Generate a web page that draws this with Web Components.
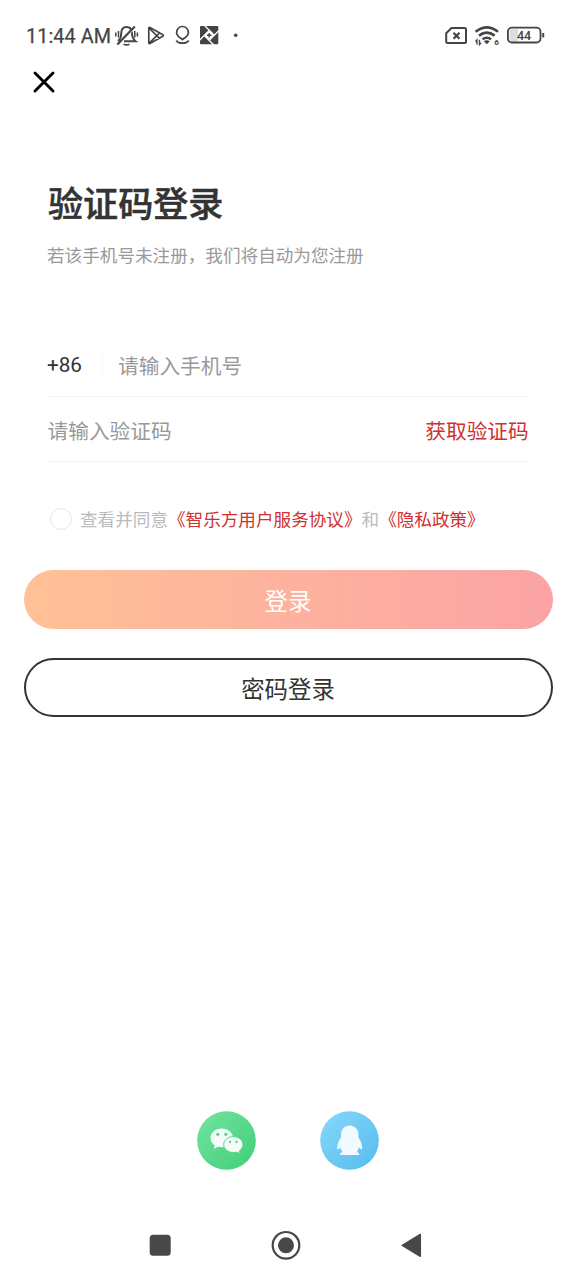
<!DOCTYPE html>
<html lang="zh-CN">
<head>
<meta charset="utf-8">
<title>验证码登录</title>
<style>
html,body{margin:0;padding:0;background:#fff}
body{width:576px;height:1280px;overflow:hidden;font-family:Roboto,"Noto Sans CJK SC",sans-serif}
</style>
</head>
<body>
<login-screen></login-screen>
<script>
function define(name, html){
  const t=document.createElement('template');
  t.innerHTML=html;
  customElements.define(name,class extends HTMLElement{
    constructor(){super();this.attachShadow({mode:'open'}).append(t.content.cloneNode(true));}
  });
}

define('status-bar',`
<style>
:host{display:flex;height:70px;padding:2px 31px 0 26px;box-sizing:border-box;align-items:center;color:#444}
.time{font:400 19.8px/24px Roboto,sans-serif;width:88px;white-space:nowrap;letter-spacing:.1px;color:#444;-webkit-text-stroke:.25px #444;padding-top:1px}
svg{display:block;flex:none}
.gap{flex:1}
</style>
<span class="time">11:44 AM</span>
<svg width="128" height="30" viewBox="114 21 128 30" fill="none" stroke="#444" stroke-width="2">
  <path d="M118 41q3.200-2.500 3.200-7.500 0-6.500 5.300-6.500 5.300 0 5.500 6.500 .2 5 3.500 7.700H124" stroke-width="2"/>
  <path d="M136.300 26.500L118.800 44.500" stroke="#fff" stroke-width="1.300"/>
  <path d="M134.800 26.500L117.300 44.500" stroke-width="2.200"/>
  <path d="M123.500 44.200q3 1.300 6 0" stroke-width="1.600"/>
  <path d="M115.800 32.500v4M118.500 31v6.500M134.800 31v6.500M137.400 32.500v4" stroke-width="1.500"/>
  <path d="M148.800 28.200v14.600q0 1.200 1.200.6L162.800 36.200q1-.7 0-1.400L150 27.600q-1.200-.6-1.200.6zM149.500 28.500l10 9.800M149.500 42.800l10-9.800" stroke-width="1.700"/>
  <path d="M182.500 39.600c-2-1.800-5.900-3.300-5.900-7.200a5.900 5.900 0 0 1 11.800 0c0 3.900-3.900 5.400-5.900 7.200zM176.300 40.500q1.500 2.700 6.200 2.700t6.200-2.700" stroke-width="1.700"/>
  <rect x="200" y="26" width="18.300" height="18.300" rx="1" fill="#444" stroke="none"/>
  <path d="M204.500 25.500l10 10M219 30.500l-10 10M213.800 45l-10-10M199.500 40.200l10-10" stroke="#fff" stroke-width="1.300"/>
  <path d="M209.200 30l5.300 5.300-5.300 5.300-5.300-5.300z" fill="#fff" stroke="none"/>
  <path d="M209.200 33v4.600M206.900 35.300h4.600" stroke-width="1.400"/>
  <circle cx="235.700" cy="35.300" r="1.800" fill="#444" stroke="none"/>
</svg>
<span class="gap"></span>
<svg width="102" height="30" viewBox="443 21 102 30" fill="none" stroke="#444" stroke-width="2">
  <path d="M451.500 28h13q1.500 0 1.500 1.500v12q0 1.500-1.500 1.500h-16.800q-1.500 0-1.500-1.500v-8.300z"/>
  <path d="M453.500 32.800l6 6M459.500 32.800l-6 6" stroke-width="2.200"/>
  <path d="M475.600 31.800q11.200-8.800 22.400 0" stroke-width="2.600"/>
  <path d="M479 35.600q7.800-5.800 15.600 0" stroke-width="2.600"/>
  <path d="M482.500 39.200q4.300-3 8.600 0" stroke-width="2.500"/>
  <path d="M483.800 41.200q3-1.800 6 0l-3 3z" fill="#444" stroke="none"/>
  <path d="M476.900 44.500v-4.500l-1.400 1.500M479.500 39.800v4.700l1.500-1.500" stroke-width="1.400"/>
  <text x="494.200" y="45" font-family="Roboto" font-size="8" font-weight="700" fill="#444" stroke="none">6</text>
  <path d="M512 29h6v13h-6q-2.500 0-2.500-3v-7q0-3 2.500-3z" fill="#ddd" stroke="none"/>
  <rect x="507.900" y="27.700" width="32.600" height="14.800" rx="4" stroke-width="1.800"/>
  <path d="M543.200 33v4.400" stroke-width="2"/>
  <text x="524" y="39.700" text-anchor="middle" font-family="Roboto" font-size="12.500" font-weight="500" fill="#444" stroke="none">44</text>
</svg>`);

define('close-button',`
<style>:host{display:block;height:26px;padding-left:32px}svg{display:block}</style>
<svg width="26" height="26" viewBox="0 0 26 26"><path d="M3 3L21 21M21 3L3 21" stroke="#000" stroke-width="2.900" stroke-linecap="round"/></svg>`);

define('page-heading',`
<style>
:host{display:block;padding:83px 48px 0}
h1{margin:0;font-size:35.100px;line-height:52px;font-weight:500;color:#333;-webkit-text-stroke:.5px #333}
p{margin:12px 0 0 -1px;font-size:17.600px;line-height:26px;color:#999}
</style>
<h1><slot name="title"></slot></h1><p><slot name="sub"></slot></p>`);

define('form-row',`
<style>
:host{display:flex;align-items:center;height:65px;margin:0 47px 0 48px;padding-top:5px;box-sizing:border-box;border-bottom:1px solid #f2f2f2;font-size:20.700px;line-height:30px;color:#999}
.body{flex:1}
:host(:not(:first-child)) .body{margin-left:-.5px}
</style>
<slot name="lead"></slot><span class="body"><slot></slot></span><slot name="action"></slot>`);

define('country-code',`
<style>
:host{display:flex;align-items:center;width:70px;color:#333}
span{width:55px;margin:-3px 0 0 -1px}
i{width:1px;height:23px;margin-top:-4px;background:#f9f9f9}
</style><span><slot></slot></span><i></i>`);

define('code-link',`
<style>:host{display:block;color:#d03030;margin-right:.3px}</style><slot></slot>`);

define('agreement-line',`
<style>
:host{display:flex;align-items:center;height:28px;padding-left:50px;font-size:17.600px;line-height:28px;color:#bbb;white-space:nowrap}
i{box-sizing:border-box;width:22px;height:22px;border:1.500px solid #e8e8e8;border-radius:50%;margin-right:8px}
span{padding-top:2px}
::slotted(a){color:#d03030}
</style><i></i><span><slot></slot></span>`);

define('pill-button',`
<style>
:host{display:flex;align-items:center;justify-content:center;box-sizing:border-box;height:59px;margin:0 23.500px;border-radius:30px;font-size:23.400px;line-height:34px;color:#fff;background:linear-gradient(90deg,#ffc197,#fba3a5)}
:host([outline]){background:#fff;color:#333;border:2px solid #333}
span{padding-top:4px}
</style><span><slot></slot></span>`);

define('social-logins',`
<style>
:host{display:flex;gap:64px;justify-content:center}
svg{display:block}
</style>
<svg width="59" height="59" viewBox="0 0 59 59">
  <defs><linearGradient id="g" x1="0" y1="0" x2="1" y2="1"><stop stop-color="#73e3a0"/><stop offset="1" stop-color="#3fcf76"/></linearGradient></defs>
  <circle cx="29.500" cy="29.500" r="29.300" fill="url(#g)"/>
  <path d="M24.800 17.500c-6.300 0-11.300 4.200-11.300 9.500 0 3 1.600 5.600 4.200 7.400l-.8 3.600 4.200-2.200c1.200.3 2.400.5 3.700.5 6.300 0 11.300-4.200 11.300-9.300s-5-9.500-11.300-9.500z" fill="#f4fdf7"/>
  <path d="M36.300 25.500c5.400 0 9.600 3.700 9.600 8.100 0 2.500-1.400 4.700-3.500 6.200l.6 2.900-3.500-1.600c-1 .3-2 .4-3.200.4-5.300 0-9.600-3.500-9.600-7.900s4.300-8.100 9.600-8.100z" fill="#f4fdf7" stroke="#59d88b" stroke-width="1"/>
  <g fill="#55d687"><circle cx="20.800" cy="23.300" r="1.600"/><circle cx="28.800" cy="23.300" r="1.600"/><circle cx="33" cy="31" r="1.200"/><circle cx="39.500" cy="31" r="1.200"/></g>
</svg>
<svg width="59" height="59" viewBox="0 0 59 59">
  <defs><linearGradient id="b" x1="0" y1="0" x2="1" y2="1"><stop stop-color="#86d9fa"/><stop offset="1" stop-color="#55bbee"/></linearGradient></defs>
  <circle cx="29.500" cy="29.500" r="29.300" fill="url(#b)"/>
  <path d="M29.700 14.500c-5 0-8.700 3.800-8.700 8.700v3.300c-2.400 3.200-3.900 7.300-3.800 10.700 0 2 1.500 1.600 3.300-.9.400 1.700 1 3.400 2 4.600-1.600.4-2.300 1.200-2.300 3.100h19c0-1.900-.7-2.700-2.300-3.100 1-1.200 1.600-2.900 2-4.600 1.800 2.500 3.300 2.900 3.300.9.100-3.400-1.400-7.500-3.800-10.700v-3.300c0-4.900-3.700-8.700-8.700-8.700z" fill="#f1faff"/>
</svg>`);

define('nav-bar',`
<style>
:host{display:flex;align-items:center;height:30px;padding:0 152px 0 148px;justify-content:space-between}
svg{display:block}
</style>
<svg width="24" height="30"><rect x="1.700" y="4.700" width="21" height="21" rx="3.500" fill="#484848"/></svg>
<svg width="30" height="30"><circle cx="15" cy="15.300" r="13.300" fill="none" stroke="#484848" stroke-width="2.200"/><circle cx="15" cy="15.300" r="8" fill="#484848"/></svg>
<svg width="24" height="30"><path d="M2.300 15.300L20.300 4.300V26.300Z" fill="#484848" stroke="#484848" stroke-width="1.500" stroke-linejoin="round"/></svg>`);

define('login-screen',`
<style>
:host{display:flex;flex-direction:column;width:576px;height:1280px;background:#fff}
.fields{margin-top:63px}
agreement-line{margin-top:43px}
.login{margin-top:37px}
.password{margin-top:29px}
social-logins{margin-top:auto;margin-bottom:60px}
nav-bar{margin-bottom:20px}
</style>
<status-bar></status-bar>
<close-button></close-button>
<page-heading><span slot="title">验证码登录</span><span slot="sub">若该手机号未注册，我们将自动为您注册</span></page-heading>
<div class="fields">
<form-row><country-code slot="lead">+86</country-code>请输入手机号</form-row>
<form-row>请输入验证码<code-link slot="action">获取验证码</code-link></form-row>
</div>
<agreement-line>查看并同意<a>《智乐方用户服务协议》</a>和<a>《隐私政策》</a></agreement-line>
<pill-button class="login">登录</pill-button>
<pill-button class="password" outline>密码登录</pill-button>
<social-logins></social-logins>
<nav-bar></nav-bar>`);
</script>
</body>
</html>
